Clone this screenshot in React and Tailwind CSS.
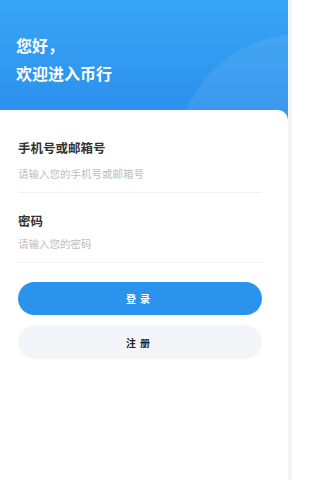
export default function App() {
  return (
    <div
      className="flex h-[480px] w-[292px] overflow-hidden bg-white"
      style={{ fontFamily: '"Noto Sans CJK SC", "Noto Sans", sans-serif' }}
    >
      <div className="relative flex w-[288px] flex-col">
        {/* Header */}
        <div className="relative h-[120px] overflow-hidden bg-gradient-to-b from-[#38a5f5] to-[#2b8eec]">
          <div className="absolute left-[176px] top-[34px] h-[250px] w-[250px] rounded-full bg-white/[0.08]" />
          <div className="relative px-4 pt-[31px] text-[16px] font-bold leading-[28px] text-white">
            <p>您好，</p>
            <p>欢迎进入币行</p>
          </div>
        </div>

        {/* Card */}
        <div className="relative -mt-[10px] flex-1 rounded-tr-[10px] bg-white pl-[18px]">
          <div className="w-[244px] pt-[30px]">
            <div className="text-[12.5px] font-bold leading-[16px] text-[#333]">手机号或邮箱号</div>
            <div className="mt-[11px] text-[10.5px] leading-[14px] text-[#bdbdbd]">请输入您的手机号或邮箱号</div>
            <div className="mt-[11px] h-px bg-[#f1f1f1]" />

            <div className="mt-[20px] text-[12.5px] font-bold leading-[16px] text-[#333]">密码</div>
            <div className="mt-[8px] text-[10.5px] leading-[14px] text-[#bdbdbd]">请输入您的密码</div>
            <div className="mt-[11px] h-px bg-[#f1f1f1]" />

            <button className="mt-[19px] flex h-[33px] w-full items-center justify-center rounded-full bg-[#2a93ee] text-[10px] font-bold tracking-[4px] text-white">
              登录
            </button>
            <button className="mt-[10px] flex h-[34px] w-full items-center justify-center rounded-full bg-[#f4f5f9] text-[10px] font-bold tracking-[4px] text-[#222]">
              注册
            </button>
          </div>
        </div>
      </div>
      <div className="h-full w-[4px] bg-[#f4f4f4]" />
    </div>
  );
}
